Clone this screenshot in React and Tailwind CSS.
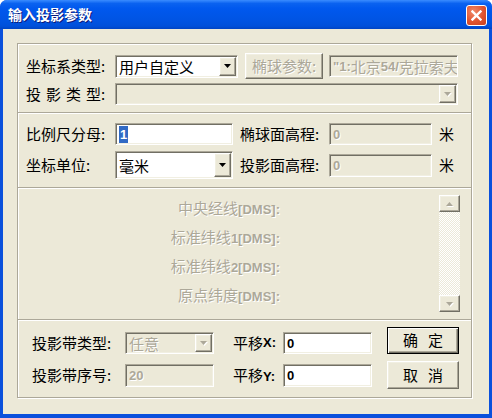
import React from "react";

// Windows XP style dialog: 输入投影参数

const sunken =
  "border border-t-[#aca899] border-l-[#aca899] border-b-white border-r-white shadow-[inset_1px_1px_0_#716f64,inset_-1px_-1px_0_#f1efe2]";
const raised =
  "border border-t-white border-l-white border-b-[#716f64] border-r-[#716f64] shadow-[inset_-1px_-1px_0_#aca899,inset_1px_1px_0_#f1efe2]";
const grayText = "text-[#aca899] [text-shadow:1px_1px_0_#fff]";
const ascii = "font-['Liberation_Sans',sans-serif] font-bold text-[13px]";

const Arrow = ({ up = false, disabled = false }) => (
  <svg width="7" height="4" viewBox="0 0 7 4" className={disabled ? "drop-shadow-[1px_1px_0_#fff]" : ""}>
    <path d={up ? "M0 4 L7 4 L3.5 0 Z" : "M0 0 L7 0 L3.5 4 Z"} fill={disabled ? "#aca899" : "#000"} />
  </svg>
);

const Combo = ({ className, disabled, children }) => (
  <div className={`${sunken} ${className} flex p-[1px] ${disabled ? "bg-[#ece9d8]" : "bg-white"}`}>
    <div
      className={`flex-1 flex items-center pl-[2px] leading-[17px] overflow-hidden whitespace-nowrap ${
        disabled ? grayText : "text-black"
      }`}
    >
      {children}
    </div>
    <div className={`${raised} w-[17px] bg-[#ece9d8] flex items-center justify-center`}>
      <Arrow disabled={disabled} />
    </div>
  </div>
);

const Field = ({ className, disabled, children }) => (
  <div
    className={`${sunken} ${className} flex items-center pl-[3px] leading-[17px] overflow-hidden whitespace-nowrap ${
      disabled ? "bg-[#ece9d8] " + grayText : "bg-white text-black"
    }`}
  >
    {children}
  </div>
);

const Sep = () => <div className="h-[2px] border-t border-t-[#aca899] border-b border-b-white" />;

const DmsLabel = ({ zh }) => (
  <div className="h-[29px] leading-[29px]">
    {zh}
    <span className={ascii}>[DMS]:</span>
  </div>
);

export default function App() {
  return (
    <div className="w-[492px] h-[418px] bg-[#0a50dc] rounded-t-[7px] flex flex-col font-['Noto_Sans_CJK_SC',sans-serif] text-[15px] text-black select-none">
      {/* title bar */}
      <div className="h-[29px] rounded-t-[7px] bg-[linear-gradient(to_bottom,#3a8cff_0%,#0a62f0_12%,#0058ee_30%,#0054e3_70%,#0050da_90%,#0044c4_100%)] flex items-center justify-between pl-[8px] pr-[5px]">
        <span className="text-white font-bold text-[14px] [text-shadow:1px_1px_0_#0a1a7a]">输入投影参数</span>
        <div className="mt-[2px] w-[21px] h-[21px] rounded-[3px] border border-white bg-[radial-gradient(circle_at_35%_30%,#f08a6a_0%,#e0532f_55%,#c8401e_100%)] flex items-center justify-center">
          <svg width="11" height="11" viewBox="0 0 11 11">
            <path d="M1.5 1.5 L9.5 9.5 M9.5 1.5 L1.5 9.5" stroke="#fff" strokeWidth="2.4" strokeLinecap="square" />
          </svg>
        </div>
      </div>

      {/* client area */}
      <div className="mx-[3px] mb-[4px] flex-1 bg-[#ece9d8] pl-[14px] pt-[14px]">
        <div className="w-[455px] h-[355px] border border-[#aca899] shadow-[1px_1px_0_#fff,inset_1px_1px_0_#fff] flex flex-col">
          {/* section 1 */}
          <div className="h-[68px] pl-[8px] pt-[9px] flex flex-col gap-[4px]">
            <div className="flex items-center h-[26px]">
              <span className="w-[89px]">坐标系类型:</span>
              <Combo className="w-[123px] h-[23px]">用户自定义</Combo>
              <div className={`${raised} ml-[7px] w-[78px] h-[26px] bg-[#ece9d8] flex items-center justify-center ${grayText}`}>
                椭球参数:
              </div>
              <Field disabled className="ml-[6px] w-[129px] h-[22px]">
                <span className={ascii}>"1:</span>北京<span className={ascii}>54/</span>克拉索夫斯基椭球
              </Field>
            </div>
            <div className="flex items-center h-[22px]">
              <span className="w-[89px]">
                <span className="tracking-[5px]">投影类</span>型:
              </span>
              <Combo disabled className="w-[343px] h-[22px]" />
            </div>
          </div>
          <Sep />

          {/* section 2 */}
          <div className="h-[73px] pl-[8px] pt-[9px] flex flex-col gap-[6px]">
            <div className="flex items-center h-[22px]">
              <span className="w-[89px]">比例尺分母:</span>
              <Field className="w-[118px] h-[22px]">
                <span className={`${ascii} bg-[#316ac5] text-white px-[1px] leading-[17px]`}>1</span>
              </Field>
              <span className="ml-[7px] w-[89px]">椭球面高程:</span>
              <Field disabled className="w-[103px] h-[22px]">
                <span className={ascii}>0</span>
              </Field>
              <span className="ml-[7px]">米</span>
            </div>
            <div className="flex items-center h-[28px]">
              <span className="w-[89px]">坐标单位:</span>
              <Combo className="w-[118px] h-[28px]">毫米</Combo>
              <span className="ml-[7px] w-[89px]">投影面高程:</span>
              <Field disabled className="w-[103px] h-[23px]">
                <span className={ascii}>0</span>
              </Field>
              <span className="ml-[7px]">米</span>
            </div>
          </div>
          <Sep />

          {/* section 3 */}
          <div className="h-[130px] flex">
            <div className={`w-[262px] pt-[4px] text-right ${grayText}`}>
              <DmsLabel zh="中央经线" />
              <DmsLabel zh={<>标准纬线<span className={ascii}>1</span></>} />
              <DmsLabel zh={<>标准纬线<span className={ascii}>2</span></>} />
              <DmsLabel zh="原点纬度" />
            </div>
            <div className="flex-1" />
            <div className="mt-[6px] mr-[11px] w-[21px] h-[117px] flex flex-col">
              <div className={`${raised} h-[17px] bg-[#ece9d8] flex items-center justify-center`}>
                <Arrow up disabled />
              </div>
              <div className="flex-1 bg-[repeating-conic-gradient(#ffffff_0_25%,#ece9d8_0_50%)] bg-[length:2px_2px]" />
              <div className={`${raised} h-[17px] bg-[#ece9d8] flex items-center justify-center`}>
                <Arrow disabled />
              </div>
            </div>
          </div>
          <Sep />

          {/* section 4 */}
          <div className="h-[76px] pl-[14px] pt-[6px] flex flex-col gap-[7px]">
            <div className="flex items-end h-[27px]">
              <span className="w-[93px] h-[22px] flex items-center">投影带类型:</span>
              <Combo disabled className="w-[89px] h-[22px]">任意</Combo>
              <span className="ml-[19px] w-[50px] h-[22px] flex items-center">
                平移<span className={ascii}>X:</span>
              </span>
              <Field className="w-[89px] h-[22px]">
                <span className={ascii}>0</span>
              </Field>
              <div className="ml-[15px] w-[72px] h-[27px] bg-[#ece9d8] border border-black shadow-[inset_1px_1px_0_#fff,inset_-1px_-1px_0_#716f64,inset_-2px_-2px_0_#aca899] flex items-center justify-center gap-[10px]">
                <span>确</span>
                <span>定</span>
              </div>
            </div>
            <div className="flex items-center h-[28px]">
              <span className="w-[93px]">投影带序号:</span>
              <Field disabled className="w-[89px] h-[23px]">
                <span className={ascii}>20</span>
              </Field>
              <span className="ml-[19px] w-[50px]">
                平移<span className={ascii}>Y:</span>
              </span>
              <Field className="w-[89px] h-[23px]">
                <span className={ascii}>0</span>
              </Field>
              <div className={`${raised} ml-[15px] w-[72px] h-[28px] bg-[#ece9d8] flex items-center justify-center gap-[10px]`}>
                <span>取</span>
                <span>消</span>
              </div>
            </div>
          </div>
        </div>
      </div>
    </div>
  );
}
